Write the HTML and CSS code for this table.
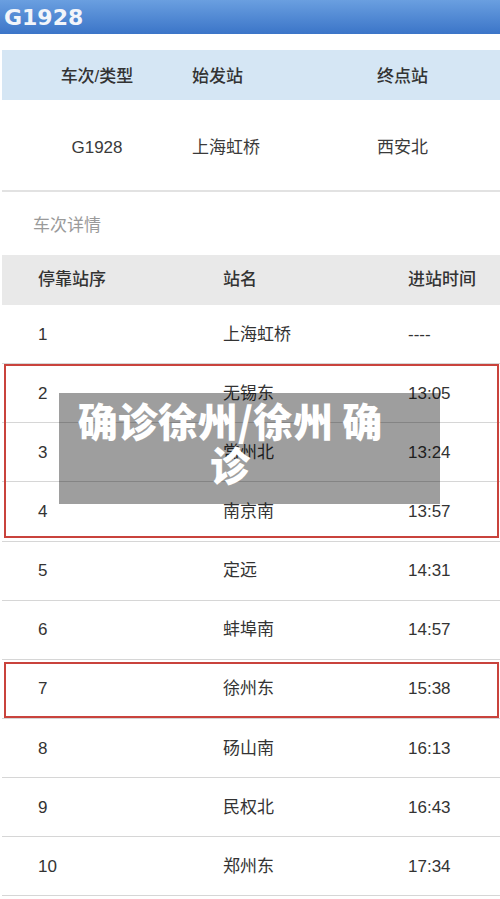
FILE: index.html
```html
<!DOCTYPE html>
<html lang="zh">
<head>
<meta charset="utf-8">
<title>G1928</title>
<link rel="stylesheet" href="styles.css">
</head>
<body>
<div class="page">
  <header class="topbar"><h1 class="title">G1928</h1></header>

  <section class="summary">
    <div class="sum-head">
      <div class="c1">车次/类型</div>
      <div class="c2">始发站</div>
      <div class="c3">终点站</div>
    </div>
    <div class="sum-row">
      <div class="c1">G1928</div>
      <div class="c2">上海虹桥</div>
      <div class="c3">西安北</div>
    </div>
  </section>

  <div class="section-label">车次详情</div>

  <section class="stops">
    <div class="stops-head">
      <div>停靠站序</div>
      <div>站名</div>
      <div>进站时间</div>
    </div>
    <div class="row"><div>1</div><div>上海虹桥</div><div>----</div></div>
    <div class="group mark-a">
      <div class="row"><div>2</div><div>无锡东</div><div>13:05</div></div>
      <div class="row"><div>3</div><div>常州北</div><div>13:24</div></div>
      <div class="row"><div>4</div><div>南京南</div><div>13:57</div></div>
    </div>
    <div class="row"><div>5</div><div>定远</div><div>14:31</div></div>
    <div class="row"><div>6</div><div>蚌埠南</div><div>14:57</div></div>
    <div class="group mark-b">
      <div class="row"><div>7</div><div>徐州东</div><div>15:38</div></div>
    </div>
    <div class="row"><div>8</div><div>砀山南</div><div>16:13</div></div>
    <div class="row"><div>9</div><div>民权北</div><div>16:43</div></div>
    <div class="row"><div>10</div><div>郑州东</div><div>17:34</div></div>
  </section>

  <div class="caption">确诊徐州/徐州 确诊</div>
</div>
</body>
</html>
```

FILE: styles.css
```css
* { box-sizing: border-box; }
html, body { margin: 0; padding: 0; background: #fff; }
body {
  font-family: "Liberation Sans", "Noto Sans CJK SC", sans-serif;
  color: #333;
  width: 500px;
  overflow: hidden;
}
.page { position: relative; width: 500px; height: 899px; overflow: hidden; }

.topbar {
  height: 34px;
  background: linear-gradient(#6a9fe0, #3b75c8);
  padding-left: 4px;
  display: flex;
  align-items: center;
}
.title {
  margin: 0;
  font-family: "DejaVu Sans", sans-serif;
  font-weight: bold;
  font-size: 22px;
  color: #f2f5fa;
}

.summary { margin-top: 16px; margin-left: 2px; }
.sum-head, .sum-row {
  display: grid;
  grid-template-columns: 190px 185px 1fr;
  align-items: center;
  font-size: 17px;
  line-height: 20px;
}
.sum-head {
  height: 50px;
  padding-top: 3px;
  background: #d5e6f4;
  font-weight: 500;
  color: #333;
}
.sum-row {
  height: 92px;
  padding-top: 5px;
  border-bottom: 2px solid #e2e2e2;
  color: #3a3a3a;
}
.sum-head .c1, .sum-row .c1 { text-align: center; }

.section-label {
  height: 63px;
  padding-left: 33px;
  display: flex;
  align-items: center;
  font-size: 17px;
  color: #9a9a9a;
  font-family: "Noto Sans CJK SC", sans-serif;
}

.stops { margin-left: 2px; }
.stops-head, .row {
  display: grid;
  grid-template-columns: 185px 185px 1fr;
  align-items: center;
  font-size: 17px;
  line-height: 20px;
  padding-left: 36px;
  white-space: nowrap;
}
.stops-head {
  height: 50px;
  background: #e9e9e9;
  font-weight: 500;
  color: #333;
}
.row {
  height: 59.15px;
  padding-top: 1px;
  border-bottom: 1px solid #d6d6d6;
  color: #333;
}

.group { position: relative; }
.group::after {
  content: "";
  position: absolute;
  left: 2px;
  right: 1px;
  border: 2px solid #c9433c;
  pointer-events: none;
}
.mark-a::after { top: 0; bottom: 4px; }
.mark-b::after { top: 2px; bottom: 1px; }

.caption {
  position: absolute;
  left: 59px;
  top: 393px;
  width: 381px;
  height: 111px;
  padding: 5px 54px 0 15px;
  background: rgba(0, 0, 0, 0.38);
  color: #fff;
  font-family: "Noto Sans CJK SC", sans-serif;
  font-weight: 900;
  font-size: 40px;
  line-height: 44px;
  text-align: center;
}
```
